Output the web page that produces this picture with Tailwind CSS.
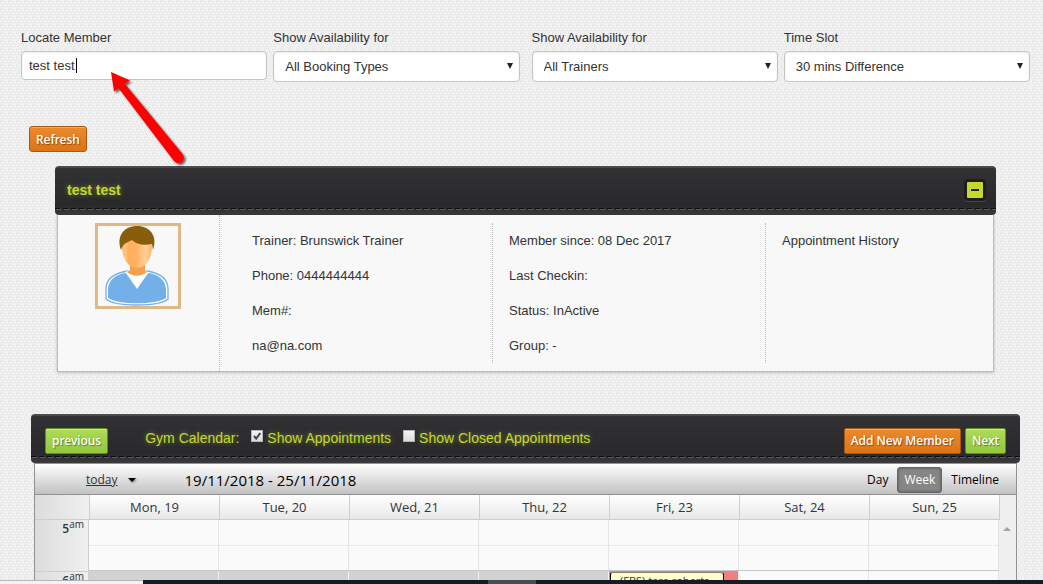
<!DOCTYPE html>
<html lang="en">
<head>
    <meta charset="UTF-8">
    <meta name="viewport" content="width=device-width, initial-scale=1.0">
    <title>Gym Calendar</title>
    <script src="https://cdn.jsdelivr.net/npm/@tailwindcss/browser@4"></script>
    <style>
        /* woven paper background */
        .weave {
            background: url("data:image/svg+xml,%3Csvg xmlns='http://www.w3.org/2000/svg' width='8' height='8' shape-rendering='crispEdges'%3E%3Cpath fill='%23f0f0f0' d='M0 0h8v8H0z'/%3E%3Cpath fill='%23d9d9d9' d='M0 1h1v1H0zM5 3h1v1H5zM2 6h1v1H2z'/%3E%3Cpath fill='%23e6e6e6' d='M4 1h1v1H4zM1 3h1v1H1zM6 6h1v1H6zM3 4h1v1H3zM7 4h1v1H7zM2 0h1v1H2z'/%3E%3Cpath fill='%23f6f6f6' d='M1 5h1v1H1zM5 5h1v1H5zM3 2h1v1H3zM7 2h1v1H7z'/%3E%3C/svg%3E") #efefef;
        }
        .stitch {
            background-image:
                repeating-linear-gradient(90deg, #0b0b0c 0 5px, transparent 5px 8px),
                repeating-linear-gradient(90deg, #5d5d60 0 5px, transparent 5px 8px);
            background-size: 100% 1px, 100% 1px;
            background-position: 0 0, 1px 1px;
            background-repeat: no-repeat;
        }
    </style>
</head>
<body class="weave h-screen overflow-hidden font-['Liberation_Sans',Arial,sans-serif] text-[13px] leading-[20px] text-[#333]">

    <!-- Filters -->
    <form class="flex pt-7 pl-[21px] pr-[13px] gap-3">
        <div class="flex flex-1 gap-[6px]">
            <div class="flex-1">
                <label for="member" class="block mb-[3px]">Locate Member</label>
                <div class="relative">
                    <input id="member" type="text" value="test test" class="block w-full h-[29px] px-[7px] bg-white border border-[#c4c4c4] rounded-[4px] shadow-[inset_0_1px_2px_rgba(0,0,0,0.08)]">
                    <span class="absolute left-[55px] top-[7px] w-px h-[15px] bg-black"></span>
                </div>
            </div>
            <div class="flex-1">
                <label for="booking" class="block mb-[3px]">Show Availability for</label>
                <div class="relative">
                    <select id="booking" class="block appearance-none w-full h-[31px] px-[11px] bg-white border border-[#c4c4c4] rounded-[4px] shadow-[inset_0_1px_2px_rgba(0,0,0,0.08)]"><option>All Booking Types</option></select>
                    <svg class="absolute right-[7px] top-[12px] pointer-events-none" width="6" height="6"><path d="M0 0h6L3 6z" fill="#222"/></svg>
                </div>
            </div>
        </div>
        <div class="flex flex-1 gap-[6px]">
            <div class="flex-1">
                <label for="trainers" class="block mb-[3px]">Show Availability for</label>
                <div class="relative">
                    <select id="trainers" class="block appearance-none w-full h-[31px] px-[11px] bg-white border border-[#c4c4c4] rounded-[4px] shadow-[inset_0_1px_2px_rgba(0,0,0,0.08)]"><option>All Trainers</option></select>
                    <svg class="absolute right-[7px] top-[12px] pointer-events-none" width="6" height="6"><path d="M0 0h6L3 6z" fill="#222"/></svg>
                </div>
            </div>
            <div class="flex-1">
                <label for="slot" class="block mb-[3px]">Time Slot</label>
                <div class="relative">
                    <select id="slot" class="block appearance-none w-full h-[31px] px-[11px] bg-white border border-[#c4c4c4] rounded-[4px] shadow-[inset_0_1px_2px_rgba(0,0,0,0.08)]"><option>30 mins Difference</option></select>
                    <svg class="absolute right-[7px] top-[12px] pointer-events-none" width="6" height="6"><path d="M0 0h6L3 6z" fill="#222"/></svg>
                </div>
            </div>
        </div>
    </form>

    <div class="pl-[29px] pt-[44px]">
        <button class="block h-[26px] pt-px px-[6px] rounded-[3px] border border-[#a9580f] bg-linear-to-b from-[#ea8a2e] to-[#de7414] shadow-[inset_0_1px_0_rgba(255,255,255,0.3)] font-['Noto_Sans',sans-serif] text-[12px] font-medium text-white text-shadow-[1px_1px_1px_rgba(0,0,0,0.4)]">Refresh</button>
    </div>

    <!-- Pointer arrow -->
    <svg class="absolute left-[105px] top-[66px] pointer-events-none drop-shadow-[2px_2px_1px_rgba(0,0,0,0.6)]" width="90" height="106">
        <path d="M6 6L25 14.5L19.5 17.5L77.5 88A5.5 5.5 0 0 1 69 95L13.5 22L9 25.5Z" fill="#fe0000"/>
    </svg>

    <!-- Member panel -->
    <section class="mt-[14px] ml-[55px] mr-[47px]">
        <header class="flex flex-col h-[49px] rounded-[4px] border-t-2 border-[#4b4b4d] bg-linear-to-b from-[#323235] from-0% via-[#29292c] via-80% to-[#3b3b3f]">
            <div class="flex-1 flex items-center justify-between pl-3 pr-[10px] pt-[3px]">
                <h2 class="text-[14px] font-bold text-[#c5d92d] text-shadow-[0_0_5px_rgba(197,217,45,0.5)]">test test</h2>
                <button aria-label="Collapse" class="flex items-center justify-center size-[22px] rounded-[4px] bg-[#1e1e20] shadow-[0_1px_0_#4a4a4d]">
                    <svg width="16" height="16"><rect width="16" height="16" rx="1" fill="#c5d92d"/><path d="M4 7h8v2H4z" fill="#222"/></svg>
                </button>
            </div>
            <div class="stitch h-[2px] mb-[5px]"></div>
        </header>
        <div class="flex mx-[2px] h-[157px] bg-[#f8f8f8] border border-t-0 border-[#bbb] shadow-[0_1px_3px_rgba(0,0,0,0.2)]">
            <div class="w-[162px] shrink-0 pt-2 pl-[37px] border-r border-dotted border-[#bbb]">
                <svg width="86" height="86" viewBox="0 0 86 86" role="img" aria-label="Member photo">
                    <defs>
                        <linearGradient id="skin"><stop offset="0" stop-color="#ffb566"/><stop offset=".12" stop-color="#ffc586"/><stop offset=".2" stop-color="#ffae5a"/><stop offset=".5" stop-color="#ffb366"/><stop offset=".8" stop-color="#ffd09a"/><stop offset="1" stop-color="#ffb366"/></linearGradient>
                    </defs>
                    <rect x="1.5" y="1.5" width="83" height="83" fill="#f8f8f8" stroke="#deb887" stroke-width="3"/>
                    <path d="M33 48C20 50 11 55 11 66V76C20 84 64 84 73 76V66C73 55 64 50 52 48Z" fill="#fff" stroke="#73b0ea" stroke-width="1.3"/>
                    <path d="M31 50C21 51 13 57 13 67V75C23 82 61 82 71 75V67C71 57 63 51 53 50L42 66Z" fill="#73b0ea"/>
                    <path d="M31 49L34 47H51L53 50L42 65Z" fill="#fff"/>
                    <path d="M35 40H50V47L52 49C46 54 38 54 32 49L35 47Z" fill="#f4a04c"/>
                    <path d="M27 22C27 37 34 45 42 45S57 37 57 22L48 14H36Z" fill="url(#skin)"/>
                    <path d="M26 27C21 13 29 3 42 3S63 13 58 27L57 21C48 23 41 21 37 17C33 19 28 20 26 27Z" fill="#875e09"/>
                </svg>
            </div>
            <div class="flex-1 grid grid-cols-[273fr_273fr_227fr]">
                <div class="my-2 pt-2 pl-8 space-y-[15px] border-r border-dotted border-[#bbb]">
                    <p>Trainer: Brunswick Trainer</p>
                    <p>Phone: 0444444444</p>
                    <p>Mem#:</p>
                    <p>na@na.com</p>
                </div>
                <div class="my-2 pt-2 pl-4 space-y-[15px] border-r border-dotted border-[#bbb]">
                    <p>Member since: 08 Dec 2017</p>
                    <p>Last Checkin:</p>
                    <p>Status: InActive</p>
                    <p>Group: -</p>
                </div>
                <div class="pt-4 pl-4">
                    <p>Appointment History</p>
                </div>
            </div>
        </div>
    </section>

    <!-- Calendar -->
    <section class="mt-[42px] ml-[31px] mr-[23px]">
        <header class="flex flex-col h-[49px] rounded-[4px] border-t-2 border-[#4b4b4d] bg-linear-to-b from-[#323235] from-0% via-[#29292c] via-80% to-[#3b3b3f]">
            <div class="flex-1 flex items-center px-[14px] text-[14px] text-[#c5d92d] text-shadow-[0_0_5px_rgba(197,217,45,0.5)]">
                <button class="h-[26px] mt-[9px] pt-px px-[6px] rounded-[2px] border border-[#5f8f1c] bg-linear-to-b from-[#aedb57] to-[#92c83e] shadow-[inset_0_1px_0_rgba(255,255,255,0.4)] font-['Noto_Sans',sans-serif] text-[12px] font-medium text-white text-shadow-[1px_1px_1px_rgba(0,0,0,0.4)]">previous</button>
                <span class="ml-[37px] mt-[3px]">Gym Calendar:</span>
                <label class="flex items-center gap-1 ml-3 mt-[3px]">
                    <span class="relative block size-3 mb-1">
                        <input type="checkbox" checked class="peer block appearance-none size-3 bg-linear-to-b from-[#f4f4f4] to-[#dcdcdc] border border-[#b5b5b5]">
                        <svg class="absolute inset-0 hidden peer-checked:block pointer-events-none" width="12" height="12"><path d="M3 6l2.2 2.6L9.3 3" fill="none" stroke="#444" stroke-width="2"/></svg>
                    </span>
                    Show Appointments
                </label>
                <label class="flex items-center gap-1 ml-3 mt-[3px]">
                    <input type="checkbox" class="block appearance-none size-3 mb-1 bg-linear-to-b from-[#f4f4f4] to-[#dcdcdc] border border-[#b5b5b5]">
                    Show Closed Appointments
                </label>
                <button class="h-[26px] mt-[9px] pt-px ml-auto px-[6px] rounded-[2px] border border-[#a9580f] bg-linear-to-b from-[#ea8a2e] to-[#de7414] shadow-[inset_0_1px_0_rgba(255,255,255,0.3)] font-['Noto_Sans',sans-serif] text-[12px] font-medium text-white text-shadow-[1px_1px_1px_rgba(0,0,0,0.4)]">Add New Member</button>
                <button class="h-[26px] mt-[9px] pt-px ml-1 px-[6px] rounded-[2px] border border-[#5f8f1c] bg-linear-to-b from-[#aedb57] to-[#92c83e] shadow-[inset_0_1px_0_rgba(255,255,255,0.4)] font-['Noto_Sans',sans-serif] text-[12px] font-medium text-white text-shadow-[1px_1px_1px_rgba(0,0,0,0.4)]">Next</button>
            </div>
            <div class="stitch h-[2px] mb-[5px]"></div>
        </header>

        <div class="mx-[3px] border-x border-[#919191] bg-[#efefef] font-['Open_Sans',sans-serif] text-[12px]">
            <div class="flex items-center h-8 pt-px border-y border-[#919191] bg-linear-to-b from-white to-[#c2c2c2] text-black">
                <a href="#" class="ml-[51px] underline text-[#333]">today</a>
                <svg class="ml-[10px] drop-shadow-[1px_1px_1px_rgba(0,0,0,0.4)]" width="8" height="4"><path d="M0 0h8L4 4z" fill="#000"/></svg>
                <span class="ml-[49px] text-[15px]">19/11/2018 - 25/11/2018</span>
                <nav class="flex items-center ml-auto mr-[14px]">
                    <button class="px-[9px]">Day</button>
                    <button class="h-[26px] px-[6px] rounded-[3px] border border-[#666] bg-[#868686] text-white shadow-[inset_0_0_3px_rgba(0,0,0,0.4)]">Week</button>
                    <button class="pl-[9px] pr-[3px]">Timeline</button>
                </nav>
            </div>
            <div class="flex text-center text-[13px] leading-[24px]">
                <div class="w-[54px] shrink-0 border-b border-[#cecece] bg-linear-to-r from-[#dcdcdc] to-[#f0f0f0]"></div>
                <div class="flex-1 grid grid-cols-7 border-r border-b border-[#cecece] bg-linear-to-b from-white to-[#e8e8e8]">
                    <div class="border-l border-[#cecece]">Mon, 19</div>
                    <div class="border-l border-[#cecece]">Tue, 20</div>
                    <div class="border-l border-[#cecece]">Wed, 21</div>
                    <div class="border-l border-[#cecece]">Thu, 22</div>
                    <div class="border-l border-[#cecece]">Fri, 23</div>
                    <div class="border-l border-[#cecece]">Sat, 24</div>
                    <div class="border-l border-[#cecece]">Sun, 25</div>
                </div>
                <div class="w-4 shrink-0"></div>
            </div>
            <div class="flex">
                <div class="w-[54px] shrink-0 border-r border-[#cecece] bg-linear-to-r from-[#dcdcdc] to-[#f0f0f0] text-right text-[12px] leading-[18px]">
                    <div class="h-[52px] pr-1 border-b border-[#cecece]"><b class="font-semibold">5</b><sup class="text-[10px]">am</sup></div>
                    <div class="h-[52px] pr-1"><b class="font-semibold">6</b><sup class="text-[10px]">am</sup></div>
                </div>
                <div class="flex-1">
                    <div class="grid grid-cols-7 h-[51px] border-b border-[#c6c6ce] bg-[#fafafa]">
                        <div class="border-r border-[#e4e4e8]"><div class="h-[26px] border-b border-dotted border-[#ddd]"></div></div>
                        <div class="border-r border-[#e4e4e8]"><div class="h-[26px] border-b border-dotted border-[#ddd]"></div></div>
                        <div class="border-r border-[#e4e4e8]"><div class="h-[26px] border-b border-dotted border-[#ddd]"></div></div>
                        <div class="border-r border-[#e4e4e8]"><div class="h-[26px] border-b border-dotted border-[#ddd]"></div></div>
                        <div class="border-r border-[#e4e4e8]"><div class="h-[26px] border-b border-dotted border-[#ddd]"></div></div>
                        <div class="border-r border-[#e4e4e8]"><div class="h-[26px] border-b border-dotted border-[#ddd]"></div></div>
                        <div class="border-r border-[#e4e4e8]"><div class="h-[26px] border-b border-dotted border-[#ddd]"></div></div>
                    </div>
                    <div class="grid grid-cols-7 h-[51px] bg-[#fafafa]">
                        <div class="border-r border-[#f0f0f0] bg-[#d2d2d2]"></div>
                        <div class="border-r border-[#f0f0f0] bg-[#d2d2d2]"></div>
                        <div class="border-r border-[#f0f0f0] bg-[#d2d2d2]"></div>
                        <div class="border-r border-[#f0f0f0] bg-[#d2d2d2]"></div>
                        <div class="border-r border-[#f0f0f0] bg-[#f08080] pt-px pl-px pr-[14px]">
                            <div class="h-full pl-[9px] border-x border-t border-x-black border-t-[#8a8560] rounded-t-[3px] bg-[#fffcd0] text-[11px] leading-[16px]">(FBS) tara roberts</div>
                        </div>
                        <div class="border-r border-[#e4e4e8]"></div>
                        <div class="border-r border-[#e4e4e8]"></div>
                    </div>
                </div>
                <div class="w-[17px] shrink-0 pt-[7px] pl-1">
                    <svg width="8" height="4"><path d="M4 0l4 4H0z" fill="#a3a3a3"/></svg>
                </div>
            </div>
        </div>
    </section>

    <!-- Status bubble and taskbar -->
    <footer class="fixed inset-x-0 bottom-0 flex h-1 bg-[#131d24]">
        <div class="w-[143px] border-t border-[#b5b5b5] bg-[#f2f2f2]"></div>
        <div class="w-12 ml-[345px] bg-[#454d53]"></div>
    </footer>
</body>
</html>
